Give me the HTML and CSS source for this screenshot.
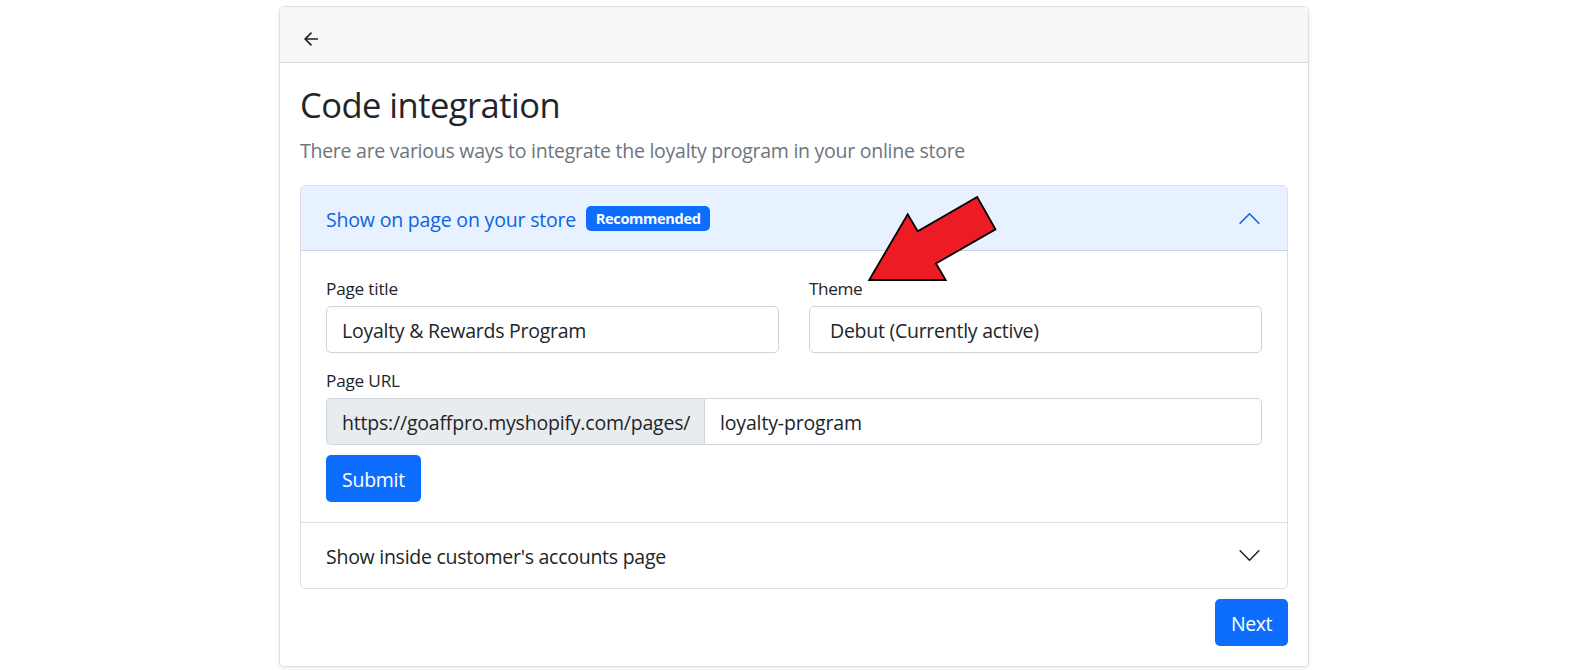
FILE: index.html
```html
<!DOCTYPE html>
<html lang="en">
<head>
<meta charset="utf-8">
<title>Code integration</title>
<link rel="stylesheet" href="styles.css">
</head>
<body>
<main class="card">
  <header class="card-header">
    <button class="back" aria-label="Back">
      <svg width="20" height="20" viewBox="0 0 20 20" fill="none" stroke="currentColor" stroke-width="1.7"><path d="M18 10H5M11.500 3.700 5.200 10l6.300 6.300"/></svg>
    </button>
  </header>
  <div class="card-body">
    <h1 class="title">Code integration</h1>
    <p class="subtitle">There are various ways to integrate the loyalty program in your online store</p>
    <div class="accordion">
      <section class="item">
        <div class="item-header active">
          <span class="item-title">Show on page on your store</span>
          <span class="badge">Recommended</span>
          <svg class="chevron" width="25" height="25" viewBox="0 0 16 16"><path fill="none" stroke="currentColor" stroke-width="1" stroke-linecap="round" stroke-linejoin="round" d="M2 11l6-6 6 6"/></svg>
        </div>
        <form class="item-body">
          <div class="row">
            <div class="field">
              <label class="label">Page title</label>
              <div class="control">Loyalty &amp; Rewards Program</div>
            </div>
            <div class="field">
              <label class="label label-theme">Theme</label>
              <div class="control select">Debut (Currently active)</div>
            </div>
          </div>
          <div class="field url">
            <label class="label">Page URL</label>
            <div class="group">
              <div class="addon">https://goaffpro.myshopify.com/pages/</div>
              <div class="control slug">loyalty-program</div>
            </div>
          </div>
          <button type="button" class="btn submit">Submit</button>
        </form>
      </section>
      <section class="item">
        <div class="item-header">
          <span class="item-title">Show inside customer's accounts page</span>
          <svg class="chevron" width="25" height="25" viewBox="0 0 16 16"><path fill="none" stroke="currentColor" stroke-width="1" stroke-linecap="round" stroke-linejoin="round" d="M2 5l6 6 6-6"/></svg>
        </div>
      </section>
    </div>
    <div class="footer"><button type="button" class="btn next">Next</button></div>
  </div>
</main>
<svg class="pointer" width="180" height="120" viewBox="0 0 180 120"><path d="M19.200 100 57.700 34.300l10 17L127.200 17l18.300 32.300L86 83.500l9.700 16.500z" fill="#ed1c24" stroke="#000" stroke-width="1.800"/></svg>
</body>
</html>
```
FILE: styles.css
```css
* { box-sizing: border-box; }
body {
  margin: 0;
  padding-top: 6px;
  height: 670px;
  overflow: hidden;
  background: #fff;
  color: #212529;
  font-family: "Open Sans", "Noto Sans", sans-serif;
  font-size: 19.5px;
  line-height: 30px;
  letter-spacing: -.26px;
  white-space: nowrap;
}
button { font: inherit; letter-spacing: inherit; border: 0; padding: 0; }
.card {
  width: 1030px;
  height: 661px;
  margin-left: 279px;
  border: 1px solid #dfdfdf;
  border-radius: 5px;
  box-shadow: 0 2px 5px rgba(0, 0, 0, .075);
}
.card-header {
  height: 56px;
  padding: 22px 0 0 20px;
  background: #f7f7f7;
  border-bottom: 1px solid #d8d8d8;
  border-radius: 4px 4px 0 0;
}
.back { display: block; height: 20px; background: none; color: #212529; }
.back svg { display: block; }
.card-body { padding: 21px 20px 20px; }
.title {
  margin: 0 0 10px;
  font-size: 34.5px;
  line-height: 42px;
  font-weight: 400;
  letter-spacing: -.52px;
}
.subtitle { margin: 0 0 19px; color: #6c757d; line-height: 30px; }
.accordion { border: 1px solid #dfdfdf; border-radius: 5px; }
.item + .item { border-top: 1px solid #dfdfdf; }
.item-header {
  display: flex;
  align-items: center;
  height: 65px;
  padding: 0 25px;
}
.item-header.active {
  color: #0c63e4;
  background: #e7f1ff;
  border-bottom: 1px solid #c7d3e3;
  border-radius: 4px 4px 0 0;
}
.item-title { padding-top: 2px; }
.active .item-title { padding-top: 4px; letter-spacing: -.18px; }
.badge {
  width: 124px;
  height: 25px;
  margin-left: 10px;
  border-radius: 5px;
  background: #0d6efd;
  color: #fff;
  font-size: 14.6px;
  font-weight: 700;
  line-height: 25px;
  letter-spacing: -.34px;
  text-align: center;
}
.chevron { margin-left: auto; }
.item-body { height: 271px; padding: 25px; margin: 0; }
.row { display: flex; gap: 30px; }
.field { flex: 1; }
.label { display: block; font-size: 17.2px; line-height: 26px; margin-bottom: 4px; letter-spacing: -.2px; }
.label-theme { letter-spacing: -.4px; }
.control, .addon {
  height: 47px;
  padding: 9px 15px 0;
  border: 1px solid #ced4da;
  border-radius: 5px;
}
.control.select { padding-left: 20px; }
.url { margin-top: 15px; }
.group { display: flex; }
.addon { width: 378px; background: #e9ecef; border-right: 0; border-radius: 5px 0 0 5px; letter-spacing: -.2px; }
.slug { flex: 1; border-radius: 0 5px 5px 0; letter-spacing: -.16px; }
.btn {
  display: block;
  height: 47px;
  padding-top: 2px;
  border-radius: 5px;
  background: #0d6efd;
  color: #fff;
}
.submit { width: 95px; margin-top: 10px; }
.footer { display: flex; justify-content: flex-end; margin-top: 10px; }
.next { width: 73px; letter-spacing: -.4px; }
.pointer { position: absolute; left: 850px; top: 180px; }
```
